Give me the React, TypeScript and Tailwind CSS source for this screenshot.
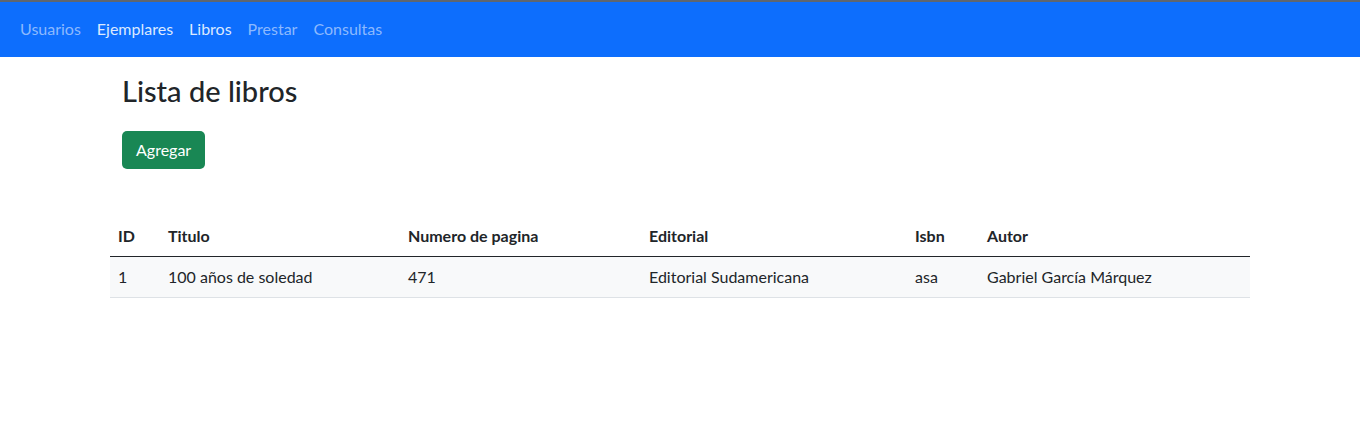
const LINKS = [
  { label: "Usuarios", active: false },
  { label: "Ejemplares", active: true },
  { label: "Libros", active: true },
  { label: "Prestar", active: false },
  { label: "Consultas", active: false },
];

const LIBROS = [
  {
    id: 1,
    titulo: "100 años de soledad",
    paginas: 471,
    editorial: "Editorial Sudamericana",
    isbn: "asa",
    autor: "Gabriel García Márquez",
  },
];

export default function App() {
  return (
    <div className="min-h-[446px] bg-white text-[#212529] font-['Lato',sans-serif]">
      {/* Navbar */}
      <nav className="border-t-2 border-[#5f6670] bg-[#0d6efd] h-[57px] px-3 pb-px flex items-center">
        <ul className="flex items-center">
          {LINKS.map((l) => (
            <li key={l.label}>
              <a
                href="#"
                className={`block px-2 py-2 text-[16px] leading-6 ${
                  l.active ? "text-[#dbe9ff]" : "text-[#8cb9fe]"
                }`}
              >
                {l.label}
              </a>
            </li>
          ))}
        </ul>
      </nav>

      <div className="w-[1140px] mx-auto">
        <div className="px-3">
          <h1 className="text-[29px] leading-[1.2] font-medium mt-[17px] mb-[22px]">
            Lista de libros
          </h1>
          <button className="bg-[#198754] text-white text-[16px] leading-6 px-[14px] py-[7px] rounded-[5px]">
            Agregar
          </button>
        </div>

        <table className="w-full mt-[47px] text-[16px] border-collapse">
          <thead>
            <tr className="border-b border-[#212529] text-left">
              <th className="px-2 py-2 font-bold w-[50px]">ID</th>
              <th className="px-2 py-2 font-bold w-[240px]">Titulo</th>
              <th className="px-2 py-2 font-bold w-[241px]">Numero de pagina</th>
              <th className="px-2 py-2 font-bold w-[266px]">Editorial</th>
              <th className="px-2 py-2 font-bold w-[72px]">Isbn</th>
              <th className="px-2 py-2 font-bold">Autor</th>
            </tr>
          </thead>
          <tbody>
            {LIBROS.map((b) => (
              <tr key={b.id} className="bg-[#f8f9fa] border-b border-[#dee2e6]">
                <td className="px-2 py-2">{b.id}</td>
                <td className="px-2 py-2">{b.titulo}</td>
                <td className="px-2 py-2">{b.paginas}</td>
                <td className="px-2 py-2">{b.editorial}</td>
                <td className="px-2 py-2">{b.isbn}</td>
                <td className="px-2 py-2">{b.autor}</td>
              </tr>
            ))}
          </tbody>
        </table>
      </div>
    </div>
  );
}
